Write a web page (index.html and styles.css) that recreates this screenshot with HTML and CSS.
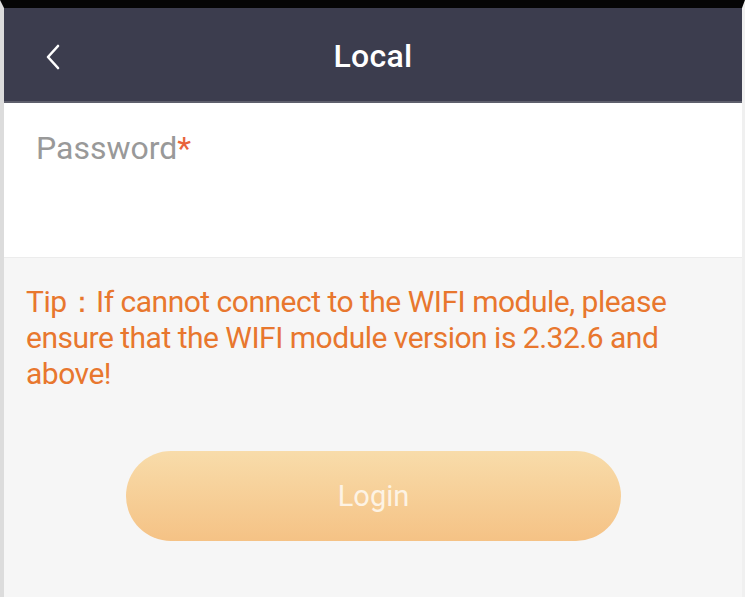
FILE: index.html
```html
<!DOCTYPE html>
<html>
<head>
<meta charset="utf-8">
<link rel="stylesheet" href="styles.css">
</head>
<body>
<div class="frame">
  <header class="bar">
    <span class="back">
      <svg width="16" height="26" viewBox="0 0 16 26"><path d="M13 2 L3 13 L13 24" fill="none" stroke="#fff" stroke-width="2.6" stroke-linecap="round" stroke-linejoin="round"/></svg>
    </span>
    <h1 class="title">Local</h1>
  </header>
  <section class="field">
    <div class="label">Password<span class="req">*</span></div>
  </section>
  <section class="content">
    <p class="tip">Tip：If cannot connect to the WIFI module, please ensure that the WIFI module version is 2.32.6 and above!</p>
    <div class="actions">
      <button class="login">Login</button>
    </div>
  </section>
</div>
</body>
</html>
```
FILE: styles.css
```css
html, body {
  margin: 0;
  padding: 0;
  height: 100%;
}
body {
  background: #fff;
  font-family: Roboto, "Liberation Sans", sans-serif;
}
.frame {
  box-sizing: border-box;
  height: 597px;
  border-top: 8px solid #050505;
  border-left: 4px solid #dcdcdc;
  border-right: 3px solid #f0f0f0;
  background: #f6f6f6;
  display: flex;
  flex-direction: column;
}
.bar {
  height: 93px;
  background: #3c3d4e;
  border-bottom: 2px solid #5e5f6c;
  display: flex;
  align-items: center;
  justify-content: center;
  position: relative;
}
.back {
  position: absolute;
  left: 41px;
  top: 36px;
  display: flex;
}
.title {
  margin: 0;
  color: #fff;
  font-size: 32px;
  font-weight: 500;
  letter-spacing: 0.3px;
  padding-top: 2px;
}
.field {
  height: 155px;
  background: #fff;
  border-bottom: 1px solid #ececec;
  padding: 26px 32px 0;
  box-sizing: border-box;
}
.label {
  color: #999;
  font-size: 32px;
}
.req {
  color: #e8643c;
}
.content {
  flex: 1;
  padding: 26px 22px 0;
}
.tip {
  margin: 0;
  color: #e8772e;
  font-size: 30px;
  letter-spacing: -0.5px;
  line-height: 36px;
}
.actions {
  display: flex;
  justify-content: center;
  margin-top: 59px;
}
.login {
  width: 495px;
  height: 90px;
  border: none;
  border-radius: 45px;
  background: linear-gradient(180deg, #f8dcaa 0%, #f5c285 100%);
  color: #fdf3e4;
  font-family: Roboto, "Liberation Sans", sans-serif;
  font-size: 29px;
  margin-left: 1px;
}
```
